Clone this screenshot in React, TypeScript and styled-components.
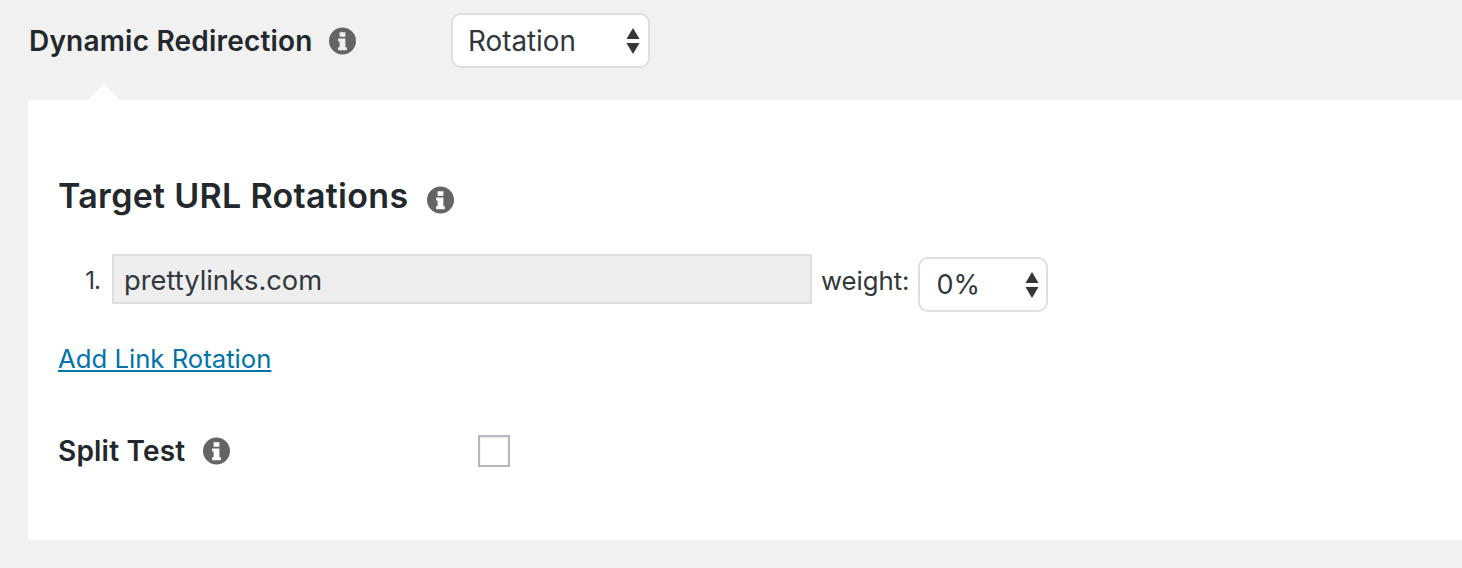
import React from "react";
import styled, { createGlobalStyle } from "styled-components";

const Global = createGlobalStyle`
  html, body { margin: 0; padding: 0; background: #f1f1f1; }
  body { font-family: Inter, "Liberation Sans", sans-serif; color: #23282d; overflow: hidden; }
`;

const Page = styled.div`
  width: 1462px;
  height: 568px;
  display: flex;
  flex-direction: column;
  padding-top: 13px;
  box-sizing: border-box;
`;

const Row = styled.div<{ $label: number }>`
  display: grid;
  grid-template-columns: ${(p) => p.$label}px auto;
  align-items: center;
`;

const Label = styled.div<{ $gap: number }>`
  display: flex;
  align-items: center;
  gap: ${(p) => p.$gap}px;
  font-size: 28px;
  font-weight: 600;
  letter-spacing: 0.2px;
  line-height: 32px;
  white-space: nowrap;
`;

const InfoIcon = styled.svg`
  width: 27px;
  height: 28px;
  flex: none;
  fill: #646464;
`;

const SelectBox = styled.div<{ $w: number; $pad: number; $right: number }>`
  width: ${(p) => p.$w}px;
  height: 55px;
  box-sizing: border-box;
  display: flex;
  align-items: center;
  justify-content: space-between;
  padding: 0 ${(p) => p.$right}px 0 ${(p) => p.$pad}px;
  background: #fff;
  border: 2px solid #dfdfdf;
  border-radius: 10px;
  font-size: 27.8px;
  color: #32373c;
`;

const Header = styled(Row)`
  padding-left: 29px;
`;

const Panel = styled.div`
  position: relative;
  margin: 32px 0 0 28px;
  height: 440px;
  background: #fff;
  padding: 76px 0 0 30px;
  box-sizing: border-box;
  &::before {
    content: "";
    position: absolute;
    left: 60px;
    top: -16px;
    border-left: 16px solid transparent;
    border-right: 16px solid transparent;
    border-bottom: 16px solid #fff;
  }
`;

const Title = styled.h2`
  display: flex;
  align-items: center;
  gap: 19px;
  margin: 0;
  font-size: 34px;
  font-weight: 600;
  letter-spacing: 0.3px;
  line-height: 40px;
  svg {
    margin-top: 8px;
  }
`;

const UrlRow = styled.div`
  display: flex;
  align-items: flex-start;
  margin-top: 38px;
  font-size: 26px;
  line-height: 54px;
  color: #32373c;
`;

const Num = styled.span`
  width: 42px;
  margin-right: 12px;
  text-align: right;
  font-size: 24px;
  letter-spacing: -1px;
`;

const UrlInput = styled.input`
  width: 700px;
  height: 50px;
  box-sizing: border-box;
  margin: 0;
  padding: 4px 10px 0;
  background: #eeeeee;
  border: 2px solid #dedede;
  font: inherit;
  font-size: 27.3px;
  color: #32373c;
  outline: none;
`;

const Weight = styled.span`
  margin: 0 8px 0 9px;
  font-size: 25.7px;
`;

const WeightSelect = styled(SelectBox)`
  margin-top: 3px;
  font-size: 27px;
`;

const AddLink = styled.a`
  display: block;
  width: fit-content;
  margin-top: 31px;
  font-size: 25.7px;
  line-height: 32px;
  color: #0073aa;
  text-decoration: underline;
`;

const SplitRow = styled(Row)`
  margin-top: 60px;
`;

const Check = styled.span`
  display: block;
  width: 32px;
  height: 32px;
  box-sizing: border-box;
  background: #fff;
  border: 2px solid #b4b9be;
  box-shadow: inset 0 1px 2px rgba(0, 0, 0, 0.1);
`;

const Arrows = () => (
  <svg width="14" height="26" viewBox="0 0 14 26" fill="#32373c">
    <path d="M7 0 L13.5 11 H0.5 Z" />
    <path d="M7 26 L13.5 15 H0.5 Z" />
  </svg>
);

const Info = () => (
  <InfoIcon viewBox="0 0 28 28">
    <path fillRule="evenodd" d="M14 0a14 14 0 1 1 0 28a14 14 0 0 1 0-28ZM11 5v4.5h6V5ZM9.5 11.5v3H11v6H9.5v3.2h9v-3.2H17v-9.2Z" />
  </InfoIcon>
);

export default function App() {
  return (
    <Page>
      <Global />
      <Header $label={422}>
        <Label $gap={16}>
          Dynamic Redirection <Info />
        </Label>
        <SelectBox $w={199} $pad={15} $right={8}>
          Rotation
          <Arrows />
        </SelectBox>
      </Header>
      <Panel>
        <Title>
          Target URL Rotations <Info />
        </Title>
        <UrlRow>
          <Num>1.</Num>
          <UrlInput readOnly value="prettylinks.com" />
          <Weight>weight:</Weight>
          <WeightSelect $w={130} $pad={17} $right={7}>
            0%
            <Arrows />
          </WeightSelect>
        </UrlRow>
        <AddLink href="#">Add Link Rotation</AddLink>
        <SplitRow $label={420}>
          <Label $gap={18}>
            Split Test <Info />
          </Label>
          <Check />
        </SplitRow>
      </Panel>
    </Page>
  );
}
